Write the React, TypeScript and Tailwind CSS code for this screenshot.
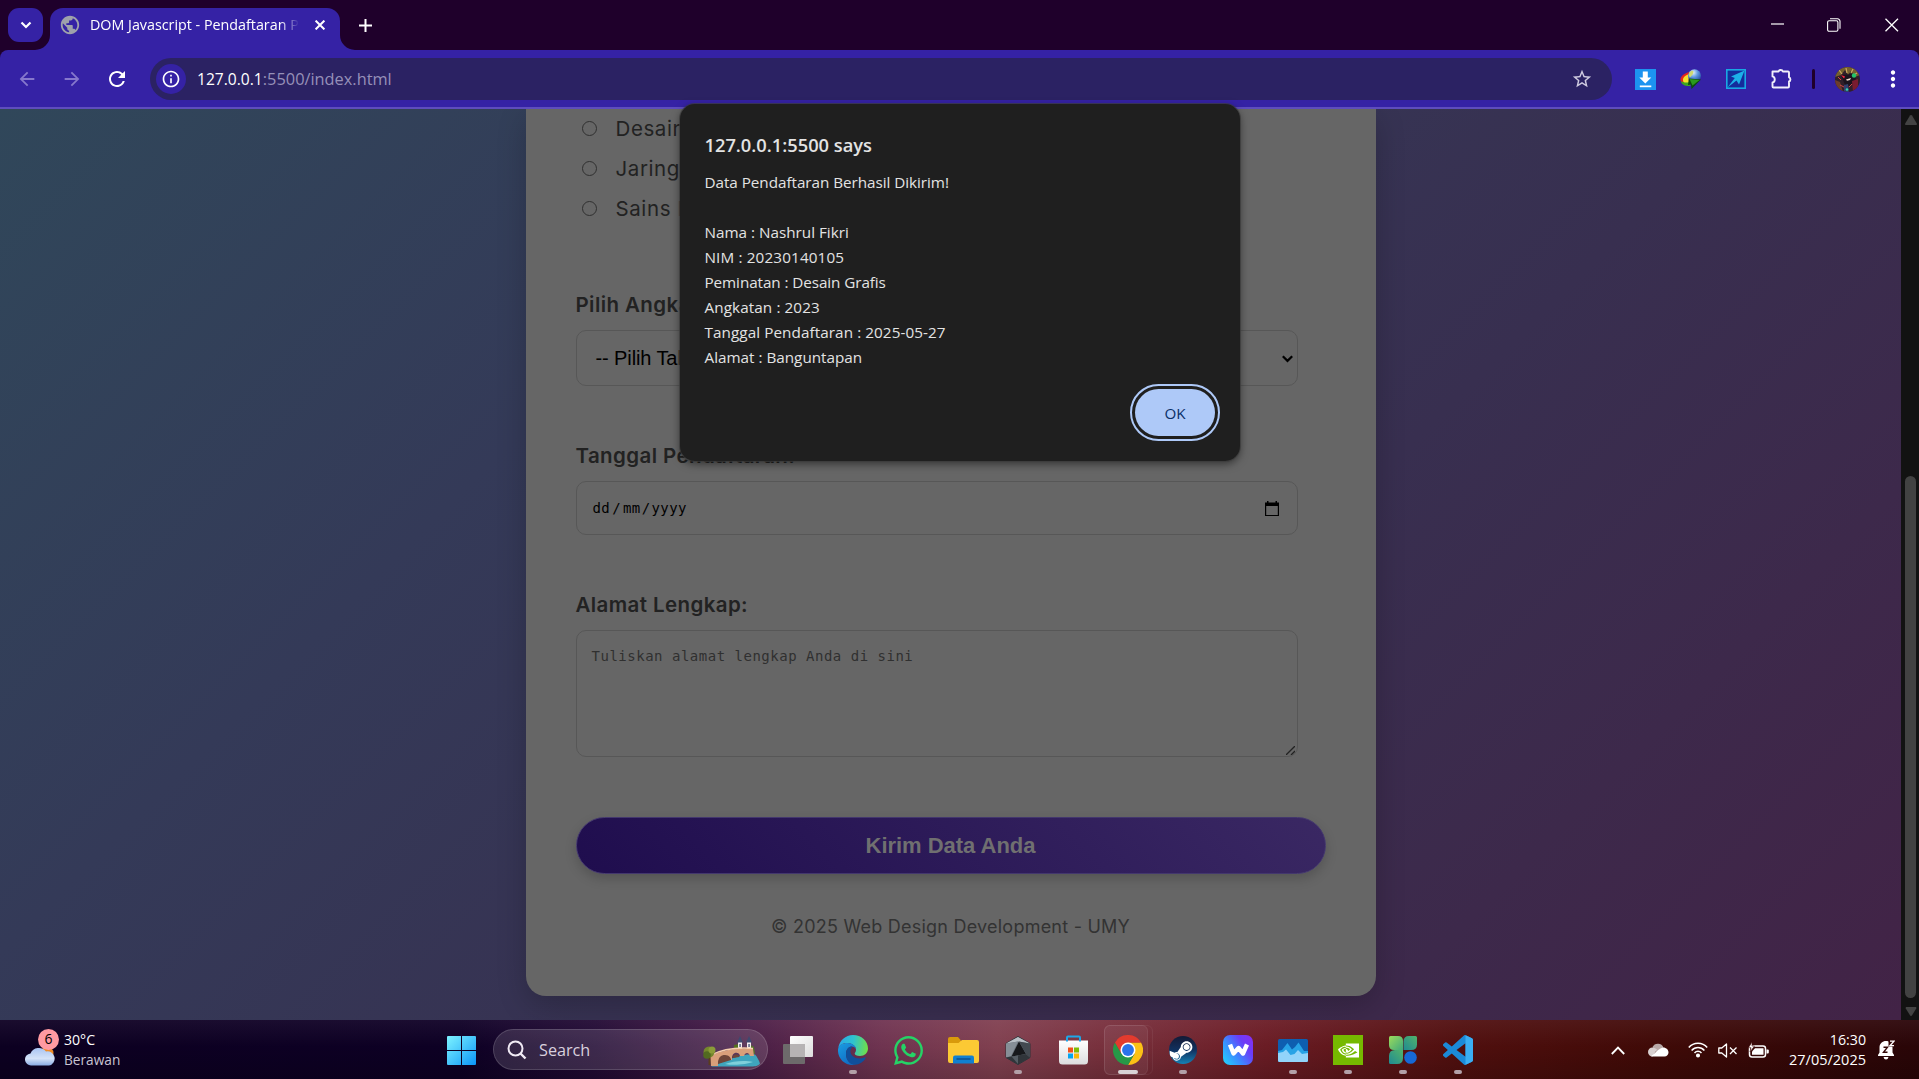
import type { ReactNode } from "react";
import { MdArrowBack, MdArrowForward, MdInfoOutline, MdMoreVert, MdPublic, MdRefresh, MdStarBorder } from "react-icons/md";
import { FaSteamSymbol, FaWhatsapp } from "react-icons/fa";
import { SiNvidia } from "react-icons/si";

/* ---------- Browser chrome ---------- */

function TabStrip() {
  return (
    <div className="flex h-[50px] shrink-0 items-end bg-[#1f002b]">
      <button className="mb-2 ml-2 flex h-[34px] w-[35px] items-center justify-center rounded-[11px] bg-[#3522a5]">
        <svg width="12" height="8" viewBox="0 0 12 8" fill="none" stroke="#fff" strokeWidth="2.200">
          <path d="M1.500 1.500 6 6l4.500-4.500" />
        </svg>
      </button>
      <div className="relative ml-[7px] flex h-[42px] w-[290px] items-center rounded-t-[13px] bg-[#3522a5]">
        <svg className="absolute bottom-0 -left-[15px]" width="15" height="15" viewBox="0 0 15 15" fill="#3522a5">
          <path d="M15 0A15 15 0 0 1 0 15H15Z" />
        </svg>
        <svg className="absolute -right-[15px] bottom-0" width="15" height="15" viewBox="0 0 15 15" fill="#3522a5">
          <path d="M0 0A15 15 0 0 0 15 15H0Z" />
        </svg>
        <MdPublic className="mb-[8px] ml-[9px] size-[22px] shrink-0 text-[#9ea1ab]" />
        <span className="mb-[8px] ml-[9px] w-[209px] overflow-hidden text-[14.300px] whitespace-nowrap text-white [mask-image:linear-gradient(to_right,#000_190px,transparent_209px)]">
          DOM Javascript - Pendaftaran P
        </span>
        <svg className="mb-[8px] ml-[16px]" width="10" height="10" viewBox="0 0 10 10" stroke="#fff" strokeWidth="2">
          <path d="M.6.6l8.800 8.800M9.400.6.6 9.400" />
        </svg>
      </div>
      <svg className="mb-[18px] ml-[19px]" width="13" height="13" viewBox="0 0 13 13" stroke="#fff" strokeWidth="2">
        <path d="M6.500 0v13M0 6.500h13" />
      </svg>
      <div className="mb-[18px] ml-auto flex h-[14px] items-center pr-[20px]">
        <svg width="14" height="14" viewBox="0 0 14 14" stroke="#fff" strokeWidth="1.200">
          <path d="M0 6h13" />
        </svg>
        <svg className="ml-[42px]" width="14" height="14" viewBox="0 0 14 14" fill="none" stroke="#fff" strokeWidth="1.100">
          <rect x=".6" y="2.800" width="10.300" height="10.500" rx="1.500" />
          <path d="M3 .8h7.500a2.500 2.500 0 0 1 2.500 2.500v7.500" />
        </svg>
        <svg className="ml-[44px]" width="14" height="14" viewBox="0 0 14 14" stroke="#fff" strokeWidth="1.300">
          <path d="M.5.8l12.500 12.500M13 .8.5 13.300" />
        </svg>
      </div>
    </div>
  );
}

function DownloaderIcon() {
  return (
    <svg width="21" height="21" viewBox="0 0 21 21">
      <rect width="21" height="21" fill="#1c93f0" />
      <path d="M7.800 2.500h5v6h3.500L10.300 14.500 4.300 8.500h3.500Z" fill="#fff" />
      <rect x="4.800" y="16.500" width="11.500" height="1.700" fill="#fff" />
    </svg>
  );
}

function IdmIcon() {
  return (
    <svg width="22" height="20" viewBox="0 0 22 20">
      <defs>
        <radialGradient id="ball" cx=".4" cy=".25" r=".8">
          <stop offset="0" stopColor="#e4f2ff" />
          <stop offset=".45" stopColor="#5d97e0" />
          <stop offset="1" stopColor="#1d3f94" />
        </radialGradient>
      </defs>
      <path d="M11 3C4 3.500 0 8 .5 11s5 6.500 9 5l-1-5c0-3 1-5 3-7Z" fill="#e4261c" />
      <path d="M10.500 5C6 5.500 2.500 8.500 3 11.500s3 4 6 3l-.5-4c0-2 .8-4 2-5.500Z" fill="#f6e12a" />
      <path d="M.8 12c.7 4 5 5.500 9.700 5l-1-4c-3 1-6.500.5-8.700-1Z" fill="#3ea51f" />
      <circle cx="14.500" cy="6.800" r="6.500" fill="url(#ball)" />
      <path d="M9.500 3.500c1.500-2.500 4-2 4-.5s-2 4-3 5-2.500-2-1-4.500Z" fill="#cfd870" />
      <path d="M9 9.500 21 10.500 11.500 20 11 15.500 8 16Z" fill="#0d4a0d" />
      <path d="M9.500 10 19.500 11 12.500 16.500Z" fill="#2a9a1b" />
    </svg>
  );
}

function SendIcon() {
  return (
    <svg width="20" height="20" viewBox="0 0 20 20">
      <rect x=".8" y=".8" width="18.400" height="18.400" fill="#142c9c" stroke="#18a8e4" strokeWidth="1.600" />
      <path d="M18.500 1.500 5 7.500 8.800 9 1.500 18.500 10.500 11.500 13 15.500Z" fill="#1cb0e8" />
    </svg>
  );
}

function PuzzleIcon() {
  return (
    <svg width="22" height="22" viewBox="0 0 22 22" fill="none" stroke="#f1effb" strokeWidth="1.900" strokeLinejoin="round">
      <path d="M2.500 3.500H8.500a2.300 2.200 0 0 1 4.400 0H18a1 1 0 0 1 1 1V9.300a2 2.200 0 0 1 0 4.200v5a1 1 0 0 1-1 1H3.500a1 1 0 0 1-1-1V14.500c3-.5 3-5.600 0-6.100Z" />
    </svg>
  );
}

function Avatar() {
  return (
    <svg width="25" height="25" viewBox="0 0 25 25">
      <defs>
        <clipPath id="avatar"><circle cx="12.500" cy="12.500" r="12.500" /></clipPath>
      </defs>
      <g clipPath="url(#avatar)">
        <rect width="25" height="25" fill="#30202a" />
        <path d="M0 0h25v8l-5 2-4-6-3 4-3-5-4 5-6 2Z" fill="#75602f" />
        <path d="M4 3l3 4M11 1l1 5M18 2l-2 4M22 6l-3 2" stroke="#cba963" strokeWidth="1.200" />
        <path d="M6 8l13-1 2 5-6 7-5-1Z" fill="#1b141e" />
        <path d="M6 8l4 1.500-1 2Z" fill="#ff2740" />
        <circle cx="19" cy="8.500" r="2.200" fill="#23c46a" />
        <path d="M11 12.500l5-1.500-1 2-3 .7Z" fill="#f3dfd0" />
        <path d="M0 13l5 2 3 10H0Z" fill="#6d3c2b" />
        <path d="M9 18l4-1 1 8H9Z" fill="#33406e" />
        <path d="M17 14l6-2v8l-5 5Z" fill="#7a1c30" />
        <path d="M3 10l3 3M14 20l3-3M5 18l4 2" stroke="#d04545" strokeWidth="1" />
        <circle cx="12" cy="22.500" r="1.300" fill="#2fd5b0" />
      </g>
    </svg>
  );
}

function Toolbar() {
  return (
    <div className="bg-[#1f002b]">
      <div className="flex h-[59px] items-center rounded-t-[8px] border-b-2 border-[#5e4dbd] bg-[#3522a5] pt-[1px]">
        <MdArrowBack className="ml-[16px] size-[22px] text-[#8678cc]" />
        <MdArrowForward className="ml-[23px] size-[22px] text-[#8678cc]" />
        <MdRefresh className="ml-[22px] size-[24px] text-white" />
        <div className="ml-[21px] flex h-[42px] w-[1462px] items-center rounded-full bg-[#2b2263] pr-[19px] pl-[6px]">
          <div className="flex size-[30px] items-center justify-center rounded-full bg-[#3522a5]">
            <MdInfoOutline className="size-5 text-white" />
          </div>
          <p className="ml-[11px] text-[15.600px] text-white">
            127.0.0.1<span className="text-[16.350px] text-[#9690b8]">:5500/index.html</span>
          </p>
          <MdStarBorder className="ml-auto size-[22px] text-[#cfcbe0]" />
        </div>
        <div className="ml-[23px] flex items-center">
          <DownloaderIcon />
          <div className="ml-6"><IdmIcon /></div>
          <div className="ml-6"><SendIcon /></div>
          <div className="ml-6"><PuzzleIcon /></div>
          <div className="ml-[20px] h-5 w-[3px] rounded bg-[#1f002b]" />
          <div className="ml-[20px]"><Avatar /></div>
          <MdMoreVert className="ml-5 size-[26px] text-white" />
        </div>
      </div>
    </div>
  );
}

/* ---------- Registration page ---------- */

function FormLabel({ children }: { children: ReactNode }) {
  return (
    <label className="block h-[30px] font-['Inter',sans-serif] text-[20.500px] leading-[30px] font-semibold tracking-[0.400px] text-[#222]">
      {children}
    </label>
  );
}

function RadioRow({ label }: { label: string }) {
  return (
    <div className="flex h-10 items-center pl-[6px] font-['Inter',sans-serif] text-[20.500px] tracking-[0.600px] text-[#222]">
      <span className="mb-[1px] size-[15.500px] rounded-full border-[1.500px] border-[#303030]" />
      <span className="mt-[1px] ml-[18.500px]">{label}</span>
    </div>
  );
}

function FormCard() {
  return (
    <div className="h-[887px] w-[850px] rounded-b-[20px] bg-[#666] px-[50px] shadow-[0_10px_30px_rgba(0,0,0,0.200)]">
      <div className="h-[120px]">
        <RadioRow label="Desain Grafis" />
        <RadioRow label="Jaringan" />
        <RadioRow label="Sains Data" />
      </div>

      <div className="mt-[61px]">
        <FormLabel>Pilih Angkatan:</FormLabel>
        <div className="mt-[10px] flex h-[56px] w-[722px] items-center justify-between rounded-[10px] border border-[#575757] pr-[4px] pl-[19px] font-['Liberation_Sans',Arial,sans-serif] text-[20px] text-black">
          <span className="tracking-[-0.100px]">-- Pilih Tahun Angkatan --</span>
          <svg className="mt-[2px]" width="11" height="8" viewBox="0 0 11 8" fill="none" stroke="#000" strokeWidth="2.200">
            <path d="M.8 1.200 5.500 5.900l4.700-4.700" />
          </svg>
        </div>
      </div>

      <div className="mt-[55px]">
        <FormLabel>Tanggal Pendaftaran:</FormLabel>
        <div className="mt-[10px] flex h-[54px] w-[722px] items-center justify-between rounded-[10px] border border-[#575757] pt-[1px] pr-[17px] pl-[16px] font-['DejaVu_Sans_Mono',monospace] text-black">
          <p className="flex text-[14px] tracking-[0.400px]">
            <span>dd</span><span className="mx-[2px]">/</span><span>mm</span><span className="mx-[1px]">/</span><span>yyyy</span>
          </p>
          <svg width="15" height="16" viewBox="0 0 15 16">
            <path d="M.6 3.500h12.800v11H.6Z" fill="none" stroke="#000" strokeWidth="1.200" />
            <path d="M0 1.500h14V5H0ZM2 0h1.500v2H2ZM10.500 0H12v2h-1.500Z" fill="#000" />
          </svg>
        </div>
      </div>

      <div className="mt-[55px]">
        <FormLabel>Alamat Lengkap:</FormLabel>
        <div className="relative mt-[10px] h-[127px] w-[722px] rounded-[10px] border border-[#575757] px-[15px] pt-[15px] font-['DejaVu_Sans_Mono',monospace] text-[14px] leading-[20px] tracking-[0.510px] text-[#303030]">
          Tuliskan alamat lengkap Anda di sini
          <svg className="absolute right-[2px] bottom-[1px]" width="9" height="9" viewBox="0 0 9 9" stroke="#222" strokeWidth="1.300">
            <path d="M0 9 9 0M5 9l4-4" />
          </svg>
        </div>
      </div>

      <button className="mt-[60px] flex h-[57px] w-[750px] items-center justify-center rounded-full border border-[#43376d] bg-[linear-gradient(45deg,#1f0d4e,#3a2863)] font-['Liberation_Sans',Arial,sans-serif] text-[22px] font-bold tracking-[-0.030px] text-[#707070] shadow-[0_5px_12px_rgba(0,0,0,0.180)]">
        Kirim Data Anda
      </button>

      <p className="mt-[39px] text-center font-['Inter',sans-serif] text-[18px] leading-[28px] tracking-[0.230px] text-[#333]">
        © 2025 Web Design Development - UMY
      </p>
    </div>
  );
}

function Scrollbar() {
  return (
    <div className="flex w-[18px] shrink-0 flex-col items-center bg-[#121212] pl-[1px]">
      <svg className="mt-[6px]" width="12" height="10" viewBox="0 0 12 10" fill="#434343">
        <path d="M6 0c.5 0 .8.300 1 .6l4.800 7.800c.4.800 0 1.600-1 1.600H1.200c-1 0-1.400-.8-1-1.600L5 .6C5.200.3 5.500 0 6 0Z" />
      </svg>
      <div className="mt-[351px] h-[522px] w-[11px] rounded-full bg-[#424242]" />
      <svg className="mt-[9px]" width="12" height="9" viewBox="0 0 12 10" fill="#434343">
        <path d="M6 10c.5 0 .8-.3 1-.6l4.800-7.800C12.200.8 11.800 0 10.800 0H1.200C.2 0-.2.8.2 1.600L5 9.400c.2.300.5.600 1 .6Z" />
      </svg>
    </div>
  );
}

function AlertDialog() {
  return (
    <div role="alertdialog" className="absolute top-[104px] left-[680px] flex h-[357px] w-[559.500px] flex-col rounded-[15px] bg-[#1f1f1f] px-[24.500px] text-[#e3e3e3] shadow-[0_0_0_1px_rgba(60,60,60,0.700),0_3px_8px_rgba(0,0,0,0.500)]">
      <h1 className="mt-[27px] text-[18.300px] leading-[28px] font-semibold">127.0.0.1:5500 says</h1>
      <div className="mt-[11px] text-[15.250px] leading-[25px]">
        <p className="tracking-[-0.040px]">Data Pendaftaran Berhasil Dikirim!</p>
        <div className="mt-[25px]">
          <p>Nama : Nashrul Fikri</p>
          <p className="tracking-[0.140px]">NIM : 20230140105</p>
          <p className="tracking-[-0.080px]">Peminatan : Desain Grafis</p>
          <p className="tracking-[0.100px]">Angkatan : 2023</p>
          <p className="tracking-[0.080px]">Tanggal Pendaftaran : 2025-05-27</p>
          <p>Alamat : Banguntapan</p>
        </div>
      </div>
      <button className="mt-[19px] flex h-[47px] w-[80px] items-center justify-center self-end rounded-full bg-[#aec9f8] pt-[1px] text-[15.200px] font-medium text-[#0a3069] outline-[2px] outline-offset-[3px] outline-[#aec9f8]">
        OK
      </button>
    </div>
  );
}

/* ---------- Taskbar ---------- */

function WeatherWidget() {
  return (
    <div className="flex w-[200px] items-center pl-[24px]">
      <div className="relative h-[40px] w-[36px]">
        <svg className="absolute bottom-[3px] left-[1px]" width="30" height="22" viewBox="0 0 30 22">
          <defs>
            <linearGradient id="cloud" x1="0" y1="0" x2="0" y2="1">
              <stop offset="0" stopColor="#a9c4f2" />
              <stop offset=".6" stopColor="#d5e3f8" />
              <stop offset="1" stopColor="#8aabe4" />
            </linearGradient>
          </defs>
          <circle cx="22" cy="8" r="6.500" fill="#f08a24" />
          <path d="M6.500 20.500a6 6 0 0 1-1-12A9 9 0 0 1 21 6.500a7 7 0 0 1 3 14Z" fill="url(#cloud)" />
        </svg>
        <span className="absolute -top-px left-[14px] flex size-[21px] items-center justify-center rounded-full bg-[#ff9aa2] text-[14px] leading-none text-black">
          6
        </span>
      </div>
      <div className="ml-[4px] text-[14.100px] leading-[20px] text-white">
        <p>30°C</p>
        <p className="text-[13.700px] text-[#c9c4d2]">Berawan</p>
      </div>
    </div>
  );
}

function StartIcon() {
  return (
    <svg width="29" height="29" viewBox="0 0 29 29">
      <defs>
        <linearGradient id="start" x1="0" y1="0" x2="1" y2="1">
          <stop offset="0" stopColor="#7df3ff" />
          <stop offset=".5" stopColor="#46c5fb" />
          <stop offset="1" stopColor="#0a95f8" />
        </linearGradient>
      </defs>
      <path d="M0 1Q0 0 1 0H14V14H0ZM15 0H28Q29 0 29 1V14H15ZM0 15H14V29H1Q0 29 0 28ZM15 15H29V28Q29 29 28 29H15Z" fill="url(#start)" />
    </svg>
  );
}

function BridgeArt() {
  return (
    <svg width="57" height="31" viewBox="0 0 57 31">
      <path d="M8 30.500c8-3 20-9 36-12h8c2 2 4 6 5 9-2 3-6 3-10 3Z" fill="#3fa5bd" />
      <path d="M22 28c8-3 20-4 28-2-6 2-18 4-28 2Z" fill="#7fd0da" />
      <path d="M31 9l5-1 0 6-5 1Z" fill="#54701f" />
      <path d="M46 8l5 3 1 7-6-1Z" fill="#56762a" />
      <path d="M35 6h4v8h-4ZM44 6h4v9h-4Z" fill="#f2ecef" />
      <path d="M34 6.500 37 0l3 6.500ZM43 6.500l3-6.500 3 6.500Z" fill="#3f4a70" />
      <path d="M36.400 8h1.300v3h-1.300ZM45.400 8h1.300v3h-1.300Z" fill="#3f4a70" />
      <path d="M7 20C18 15 32 11 50 13l1 7h-4c-1-4-5-4-6 0h-4c-1-5-8-4-8 2v2h-1c-2-6-12-5-13 3v3H8Z" fill="#d99f7a" />
      <path d="M15 28c0-7 3-9 7-9s6 3 6 5Z" fill="#6f4639" />
      <path d="M29.500 22c0-4 6-5 7-1Z" fill="#6f4639" />
      <path d="M7 19.500C18 14 32 11 50 12.500" stroke="#f6cfae" strokeWidth="1.500" fill="none" />
      <path d="M6.500 20v9" stroke="#5a3c1c" strokeWidth="2" />
      <circle cx="6" cy="16" r="5.500" fill="#74862c" />
      <circle cx="4" cy="19" r="3.800" fill="#526a20" />
      <circle cx="9" cy="14" r="3.500" fill="#8a9b38" />
    </svg>
  );
}

function SearchBox() {
  return (
    <div className="ml-[17px] flex h-[41px] w-[275px] items-center rounded-full border border-white/15 bg-white/[0.130] pr-[7px] pl-[13px]">
      <svg width="20" height="20" viewBox="0 0 20 20" fill="none" stroke="#f0eaf4" strokeWidth="2">
        <circle cx="8.500" cy="8.500" r="7" />
        <path d="M13.500 13.500l5 5" strokeWidth="2.400" />
      </svg>
      <span className="mt-[2px] ml-[12px] text-[16.200px] text-[#d9d0de]">Search</span>
      <div className="mt-[4px] ml-auto"><BridgeArt /></div>
    </div>
  );
}

function TaskViewIcon() {
  return (
    <svg width="30" height="30" viewBox="0 0 30 30">
      <defs>
        <linearGradient id="tv" x1="0" y1="0" x2="1" y2="1">
          <stop offset="0" stopColor="#fff" />
          <stop offset="1" stopColor="#dcdcdc" />
        </linearGradient>
      </defs>
      <rect x="0" y="9" width="22" height="20" rx="1" fill="#6d6a6b" />
      <rect x="7" y="1" width="23" height="21" rx="1" fill="url(#tv)" />
      <rect x="7" y="9" width="15" height="13" fill="#b6b3b4" />
    </svg>
  );
}

function EdgeIcon() {
  return (
    <svg width="30" height="30" viewBox="0 0 30 30">
      <defs>
        <linearGradient id="edge-a" x1="0" y1=".3" x2="1" y2=".4">
          <stop offset="0" stopColor="#2aa9e8" />
          <stop offset=".5" stopColor="#2fc3cf" />
          <stop offset="1" stopColor="#6fdf4a" />
        </linearGradient>
        <linearGradient id="edge-b" x1="0" y1="0" x2=".6" y2="1">
          <stop offset="0" stopColor="#1b9de2" />
          <stop offset="1" stopColor="#0f6cc4" />
        </linearGradient>
      </defs>
      <path d="M.3 13C1.500 5.500 7.500 0 15 0c8.500 0 15 6.200 15 13.500 0 4.500-3.500 7.500-8 7.500-3.500 0-5.300-1.200-5.300-2.300 0-.9 1.300-1.500 1.300-4C18 11 14 8 9.500 8 5 8 1.500 10 .3 13Z" fill="url(#edge-a)" />
      <path d="M0 14.500C.5 10 4.500 8 9.500 8c4.500 0 8.500 3 8.500 6-1-1.700-2.700-2.500-4.500-2.500-3.500 0-5.500 4-5.500 7.500C8 25 12.500 30 18 29.700 7 31.500-.5 23.500 0 14.500Z" fill="url(#edge-b)" />
      <path d="M13.500 11.500c-3.500 0-5.500 4-5.500 7.500C8 25 12 30 17 29.800c4.500-.3 8.500-2.800 10.700-6.800.3-.6-.2-1-.8-.7-1.400.7-3.200 1.200-5.200 1.200-5.500 0-9.300-3.500-9.300-7 0-2 .8-3.500 2.300-4.500Z" fill="#104f9b" />
    </svg>
  );
}

function FolderIcon() {
  return (
    <svg width="31" height="28" viewBox="0 0 31 28">
      <path d="M0 3a2 2 0 0 1 2-2h8l3 3.500V9H0Z" fill="#d99a0b" />
      <path d="M0 7h10.500L14 4h15a2 2 0 0 1 2 2v19a2 2 0 0 1-2 2H2a2 2 0 0 1-2-2Z" fill="#fcc934" />
      <path d="M5 27.500v-6a2 2 0 0 1 2-2h17a2 2 0 0 1 2 2v6Z" fill="#1180d0" />
      <path d="M9 23h13" stroke="#0b4f8f" strokeWidth="1.500" strokeLinecap="round" />
    </svg>
  );
}

function CubeIcon() {
  return (
    <svg width="26" height="29" viewBox="0 0 26 29">
      <path d="M13 .5 25 7.500v14L13 28.500 1 21.500v-14Z" fill="#6b737b" stroke="#2e3338" />
      <path d="M13 1 25 7.500 13 5.500 1 7.500Z" fill="#b9c0c6" />
      <path d="M1 7.500 13 5.500 6 20 1 21.500Z" fill="#868f97" />
      <path d="M14 5.500 21 18 6.500 20.500Z" fill="#17191c" />
      <path d="M25 7.500v14L21 18 14 5.500Z" fill="#434a51" />
      <path d="M1 21.500 6.500 20.500 21 18l4 3.500-12 7Z" fill="#30353a" />
      <path d="M6.500 20.500 13 28V19.500Z" fill="#555d64" />
    </svg>
  );
}

function StoreIcon() {
  return (
    <svg width="29" height="30" viewBox="0 0 29 30">
      <defs>
        <linearGradient id="store" x1="0" y1="0" x2="0" y2="1">
          <stop offset="0" stopColor="#fff" />
          <stop offset="1" stopColor="#dcdcde" />
        </linearGradient>
      </defs>
      <path d="M0 5.500h29V26a3.500 3.500 0 0 1-3.500 3.500h-22A3.500 3.500 0 0 1 0 26Z" fill="url(#store)" />
      <path d="M8 6.500V2.500q0-1 1-1H20q1 0 1 1v4" fill="none" stroke="#1ea7e8" strokeWidth="2" />
      <path d="M9 12.500h5v5H9Z" fill="#f1511b" />
      <path d="M15 12.500h5v5h-5Z" fill="#80bc06" />
      <path d="M9 18.500h5v5H9Z" fill="#05a5f0" />
      <path d="M15 18.500h5v5h-5Z" fill="#fbb80a" />
    </svg>
  );
}

function ChromeIcon() {
  return (
    <svg width="30" height="30" viewBox="0 0 48 48">
      <path d="M24 12H44.800A24 24 0 0 1 24 48L34.400 30Z" fill="#fbc116" />
      <path d="M13.600 30 3.200 12A24 24 0 0 0 24 48l10.400-18Z" fill="#279847" />
      <path d="M24 12H44.800A24 24 0 0 0 3.200 12L13.600 30Z" fill="#e33b2e" />
      <circle cx="24" cy="24" r="12" fill="#fff" />
      <circle cx="24" cy="24" r="9.500" fill="#2b73ea" />
    </svg>
  );
}

function SteamIcon() {
  return (
    <div className="relative size-[28px] overflow-hidden rounded-full bg-gradient-to-b from-[#131a36] via-[#10315f] to-[#1383b6]">
      <FaSteamSymbol className="absolute top-[2px] -left-[1px] size-[26px] text-white" />
    </div>
  );
}

function WIcon() {
  return (
    <div className="flex size-[30px] items-center justify-center rounded-[7px] bg-[linear-gradient(55deg,#1fd8fb,#3b8bff_38%,#6a3df8_70%,#8b2cf0)]">
      <svg width="21" height="14" viewBox="0 0 21 14" fill="none" stroke="#fff" strokeWidth="4.400" strokeLinejoin="round">
        <path d="M2 1.500 5.500 10.500 10.500 5 15 10.500 19 1.500" />
      </svg>
    </div>
  );
}

function MonitorIcon() {
  return (
    <svg width="30" height="23" viewBox="0 0 30 23">
      <rect width="30" height="23" rx="1.500" fill="#0e5eb0" />
      <path d="M0 12 4 11 9.500 4 14 10.500 17 8 20.500 3.500 26 12l4 0v10H0Z" fill="#27a3e6" />
      <path d="M0 14 5 13 8 10.500 12.500 16 16.500 15 20 11l4 4 6-1v7.500a1.500 1.500 0 0 1-1.500 1.500h-27A1.500 1.500 0 0 1 0 21.500Z" fill="#92d4fa" />
    </svg>
  );
}

function NvidiaIcon() {
  return (
    <div className="flex size-[30px] items-center justify-center bg-[#76b900]">
      <SiNvidia className="size-[21px] text-white" />
    </div>
  );
}

function CloverIcon() {
  return (
    <svg width="28" height="28" viewBox="0 0 28 28">
      <defs>
        <linearGradient id="clover" x1="0" y1="0" x2="1" y2="1">
          <stop offset="0" stopColor="#9cdb5c" />
          <stop offset="1" stopColor="#3fa97c" />
        </linearGradient>
        <linearGradient id="clover-b" x1="1" y1="0" x2="0" y2="1">
          <stop offset="0" stopColor="#52b36a" />
          <stop offset="1" stopColor="#1f8a93" />
        </linearGradient>
      </defs>
      <path d="M26.500 0H20q-5.500 0-5.500 5.500V14H22q6 0 6-5.500v-7Q28 0 26.500 0Z" fill="url(#clover-b)" />
      <path d="M1.500 28H8q6 0 6-6v-8H6q-6 0-6 6v6.500Q0 28 1.500 28Z" fill="url(#clover-b)" />
      <path d="M1.500 0H9q5 0 5 5v9H5q-5 0-5-5V1.500Q0 0 1.500 0Z" fill="url(#clover)" />
      <circle cx="21.500" cy="21.500" r="6.300" fill="#1668d6" />
    </svg>
  );
}

function CodeIcon() {
  return (
    <svg width="30" height="30" viewBox="0 0 24 24">
      <path
        fill="#1b8ad8"
        d="M23.150 2.587L18.210.21a1.494 1.494 0 0 0-1.705.290l-9.460 8.630-4.120-3.128a.999.999 0 0 0-1.276.057L.327 7.261A1 1 0 0 0 .326 8.740L3.899 12 .326 15.260a1 1 0 0 0 .001 1.479L1.650 17.940a.999.999 0 0 0 1.276.057l4.120-3.128 9.460 8.630a1.492 1.492 0 0 0 1.704.290l4.942-2.377A1.500 1.500 0 0 0 24 20.060V3.939a1.500 1.500 0 0 0-.850-1.352zm-5.146 14.861L10.826 12l7.178-5.448v10.896z"
      />
      <path fill="#3aaef2" d="M18 .2 23.150 2.587A1.500 1.500 0 0 1 24 3.939V20.060a1.500 1.500 0 0 1-.850 1.352L18 23.800Z" />
    </svg>
  );
}

type TaskbarApp = { name: string; icon: ReactNode; state?: "running" | "active" };

const apps: TaskbarApp[] = [
  { name: "Task view", icon: <TaskViewIcon /> },
  { name: "Edge", icon: <EdgeIcon />, state: "running" },
  { name: "WhatsApp", icon: <FaWhatsapp className="size-[33px] text-[#25d366]" /> },
  { name: "Explorer", icon: <FolderIcon /> },
  { name: "Cube", icon: <CubeIcon />, state: "running" },
  { name: "Store", icon: <StoreIcon /> },
  { name: "Chrome", icon: <ChromeIcon />, state: "active" },
  { name: "Steam", icon: <SteamIcon />, state: "running" },
  { name: "W", icon: <WIcon /> },
  { name: "Monitor", icon: <MonitorIcon />, state: "running" },
  { name: "Nvidia", icon: <NvidiaIcon />, state: "running" },
  { name: "Clover", icon: <CloverIcon />, state: "running" },
  { name: "Code", icon: <CodeIcon />, state: "running" },
];

function AppButton({ app }: { app: TaskbarApp }) {
  return (
    <div className="relative flex h-full w-[55px] items-center justify-center">
      {app.state === "active" && (
        <>
          <span className="absolute top-[5px] left-[3px] h-[50px] w-[49px] rounded-[6px] border border-white/[0.060]" />
          <span className="absolute top-[5px] left-[3px] h-[50px] w-[44px] rounded-[6px] border border-white/[0.060] bg-white/[0.060]" />
        </>
      )}
      <span className="relative mt-[1px]">{app.icon}</span>
      {app.state === "running" && <span className="absolute bottom-[5px] h-[4px] w-[8px] rounded-full bg-[#b3a0a8]" />}
      {app.state === "active" && <span className="absolute bottom-[5px] h-[4px] w-[20px] rounded-full bg-[#d9d3d6]" />}
    </div>
  );
}

function SystemTray() {
  return (
    <div className="mt-[1px] ml-auto flex items-center pr-[24px]">
      <svg width="14" height="9" viewBox="0 0 14 9" fill="none" stroke="#fff" strokeWidth="1.800">
        <path d="M.8 8 7 1.600 13.200 8" />
      </svg>
      <svg className="ml-[23px]" width="21" height="14" viewBox="0 0 21 14">
        <path d="M4.500 4A6 6 0 0 1 15.500 4.500L8 9Z" fill="#b9aaa9" />
        <path d="M4.500 13.500a4.500 4.500 0 0 1 0-9c2 0 3 1 4.500 2Z" fill="#d8d0d0" />
        <path d="M3 13.200c4-3 8-8 12-8.700 3.500 0 5.500 2.500 5.500 5 0 2.300-1.700 4-4 4H4.500Z" fill="#fff" />
      </svg>
      <svg className="ml-[19px]" width="20" height="16" viewBox="0 0 20 16" fill="none" stroke="#fff" strokeWidth="1.500">
        <path d="M.8 5.500C5.500-.3 14.500-.3 19.200 5.500M3.600 8.400c3.500-4 9.300-4 12.800 0M6.500 11c2-2.200 5-2.200 7 0" />
        <circle cx="10" cy="13.500" r="1.300" fill="#fff" />
      </svg>
      <svg className="ml-[10px]" width="20" height="15" viewBox="0 0 20 15" fill="none" stroke="#fff" strokeWidth="1.300">
        <path d="M.8 5v5h3l4.700 4V1L3.800 5Z" strokeLinejoin="round" />
        <path d="M12 4.500l6.500 6.500M18.500 4.500 12 11" />
      </svg>
      <svg className="ml-[10px]" width="21" height="17" viewBox="0 0 21 17">
        <rect x="1.500" y="4" width="16" height="11" rx="2.500" fill="none" stroke="#fff" strokeWidth="1.500" />
        <path d="M4 12.800V9.500L7 6.300h8.500v6.500Z" fill="#fff" />
        <path d="M18.500 7.500h1.300q1 0 1 1v2q0 1-1 1h-1.300Z" fill="#fff" />
        <path d="M4 0 .5 5.700H3L2 10 6.500 4H4Z" fill="#fff" stroke="#400a06" strokeWidth=".6" />
      </svg>
      <div className="ml-[18px] w-[79px] text-right text-[14.200px] leading-[20.500px] text-white">
        <p>16:30</p>
        <p className="text-[14.500px]">27/05/2025</p>
      </div>
      <svg className="ml-[12px]" width="17" height="20" viewBox="0 0 17 20">
        <path d="M8 1C4.500 1 1.500 3.500 1.500 7.500v5L0 15q-.3 1 .7 1h14.600q1 0 .7-1L14.500 12.500V7.500C14.500 3.500 11.500 1 8 1Z" fill="#fff" />
        <path d="M5.500 17h5q-.5 2.500-2.500 2.500T5.500 17Z" fill="#fff" />
        <path d="M5.500 7.300h4l-4 5h4" fill="none" stroke="#330707" strokeWidth="1.400" />
        <path d="M10.500 0H17v6.500h-6.500Z" fill="#330707" />
        <path d="M12 1.200h4l-4 4.500h4" fill="none" stroke="#fff" strokeWidth="1.300" />
      </svg>
    </div>
  );
}

function Taskbar() {
  return (
    <div className="flex h-[59px] shrink-0 items-center bg-[linear-gradient(to_bottom,rgba(255,220,255,0.060),rgba(0,0,0,0)_45%,rgba(0,0,0,0.160)),linear-gradient(to_right,#0c0021,#0d0024_24%,#210a33_31%,#431a44_38%,#6f3450_46%,#80404f_52%,#772f3b_58%,#6a1c24_66%,#500f0e_76%,#400a07_86%,#290507)]">
      <WeatherWidget />
      <div className="mt-[2px] ml-[247px]"><StartIcon /></div>
      <SearchBox />
      <div className="ml-[2.500px] flex h-full">
        {apps.map((app) => (
          <AppButton key={app.name} app={app} />
        ))}
      </div>
      <SystemTray />
    </div>
  );
}

export default function App() {
  return (
    <div className="relative flex h-[1079px] w-[1919px] flex-col overflow-hidden font-['Open_Sans',sans-serif]">
      <TabStrip />
      <Toolbar />
      <main className="flex h-[911px] overflow-hidden">
        <div className="flex flex-1 justify-center bg-[linear-gradient(135deg,#30475a,#343a58_30%,#382f50_62%,#422346)]">
          <FormCard />
        </div>
        <Scrollbar />
      </main>
      <Taskbar />
      <AlertDialog />
    </div>
  );
}
